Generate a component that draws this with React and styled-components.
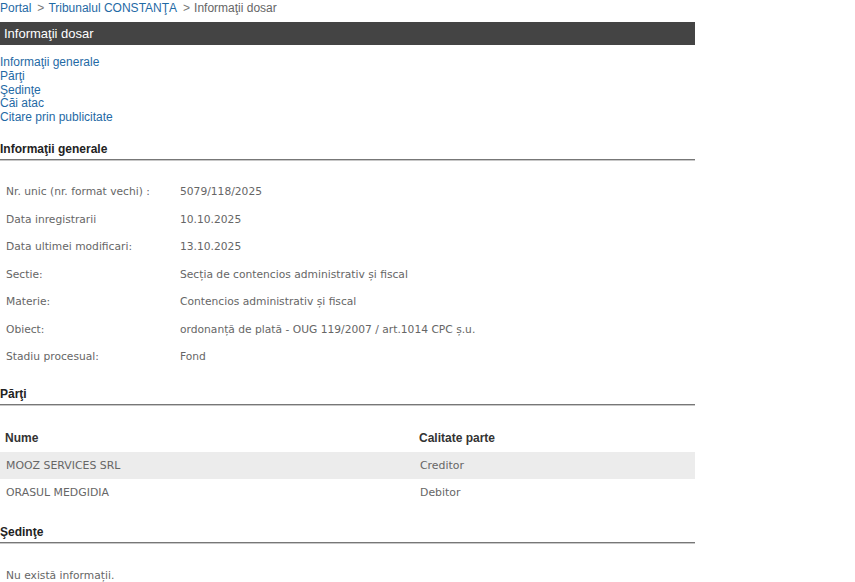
import React from "react";
import styled, { createGlobalStyle } from "styled-components";

const Global = createGlobalStyle`
  html, body { margin: 0; padding: 0; background: #fff; }
  body { font-family: "Liberation Sans", Arial, sans-serif; }
`;

const Page = styled.div`
  width: 695px;
`;

const Breadcrumb = styled.div`
  height: 22px;
  box-sizing: border-box;
  padding-top: 1px;
  font-size: 12px;
  line-height: 15px;
  color: #666;
  white-space: nowrap;
`;

const Crumb = styled.a`
  color: #1f6aa5;
  text-decoration: none;
`;

const Sep = styled.span`
  color: #777;
  margin: 0 4px 0 6px;
`;

const TitleBar = styled.div`
  height: 23px;
  background: #444;
  color: #fff;
  font-size: 13px;
  line-height: 23px;
  padding-left: 4px;
`;

const Nav = styled.nav`
  display: flex;
  flex-direction: column;
  margin-top: 11px;
`;

const NavLink = styled.a`
  font-size: 12px;
  line-height: 13.75px;
  color: #1f6aa5;
  text-decoration: none;
`;

const SectionTitle = styled.h3`
  margin: ${(p) => p.$top}px 0 0;
  font-size: 12px;
  font-weight: bold;
  line-height: 14px;
  color: #222;
  padding-bottom: 3px;
  border-bottom: 1px solid #777;
  box-shadow: 0 1px 0 #c8c8c8;
`;

const InfoList = styled.div`
  margin-top: 18px;
  display: flex;
  flex-direction: column;
`;

const InfoRow = styled.div`
  display: grid;
  grid-template-columns: 174px 1fr;
  height: 27.5px;
  align-items: center;
  padding-left: 6px;
  font-family: "DejaVu Sans", Verdana, sans-serif;
  font-size: 10.7px;
  color: #666;
`;

const PartiesTable = styled.div`
  margin-top: 19px;
  display: flex;
  flex-direction: column;
`;

const PartyRow = styled.div`
  display: grid;
  grid-template-columns: 414px 1fr;
  height: ${(p) => (p.$head ? 28 : 27)}px;
  align-items: center;
  background: ${(p) => (p.$shade ? "#ececec" : "transparent")};
`;

const HeadCell = styled.div`
  padding-left: 5px;
  font-size: 12px;
  font-weight: bold;
  color: #333;
`;

const Cell = styled.div`
  padding-left: 6px;
  font-family: "DejaVu Sans", Verdana, sans-serif;
  font-size: 10.9px;
  color: #666;
`;

const Empty = styled.div`
  margin-top: 26px;
  padding-left: 6px;
  font-family: "DejaVu Sans", Verdana, sans-serif;
  font-size: 10.7px;
  line-height: 14px;
  color: #666;
`;

const info = [
  ["Nr. unic (nr. format vechi) :", "5079/118/2025"],
  ["Data inregistrarii", "10.10.2025"],
  ["Data ultimei modificari:", "13.10.2025"],
  ["Sectie:", "Secția de contencios administrativ și fiscal"],
  ["Materie:", "Contencios administrativ și fiscal"],
  ["Obiect:", "ordonanță de plată - OUG 119/2007 / art.1014 CPC ș.u."],
  ["Stadiu procesual:", "Fond"],
];

const parties = [
  ["MOOZ SERVICES SRL", "Creditor"],
  ["ORASUL MEDGIDIA", "Debitor"],
];

export default function App() {
  return (
    <>
      <Global />
      <Page>
        <Breadcrumb>
          <Crumb href="#">Portal</Crumb>
          <Sep>&gt;</Sep>
          <Crumb href="#">Tribunalul CONSTANŢA</Crumb>
          <Sep>&gt;</Sep>
          Informaţii dosar
        </Breadcrumb>
        <TitleBar>Informaţii dosar</TitleBar>
        <Nav>
          <NavLink href="#">Informaţii generale</NavLink>
          <NavLink href="#">Părţi</NavLink>
          <NavLink href="#">Şedinţe</NavLink>
          <NavLink href="#">Căi atac</NavLink>
          <NavLink href="#">Citare prin publicitate</NavLink>
        </Nav>
        <SectionTitle $top={17}>Informaţii generale</SectionTitle>
        <InfoList>
          {info.map(([k, v]) => (
            <InfoRow key={k}>
              <span>{k}</span>
              <span>{v}</span>
            </InfoRow>
          ))}
        </InfoList>
        <SectionTitle $top={17}>Părţi</SectionTitle>
        <PartiesTable>
          <PartyRow $head>
            <HeadCell>Nume</HeadCell>
            <HeadCell>Calitate parte</HeadCell>
          </PartyRow>
          {parties.map(([n, q], i) => (
            <PartyRow key={n} $shade={i % 2 === 0}>
              <Cell>{n}</Cell>
              <Cell>{q}</Cell>
            </PartyRow>
          ))}
        </PartiesTable>
        <SectionTitle $top={19}>Şedinţe</SectionTitle>
        <Empty>Nu există informații.</Empty>
      </Page>
    </>
  );
}
